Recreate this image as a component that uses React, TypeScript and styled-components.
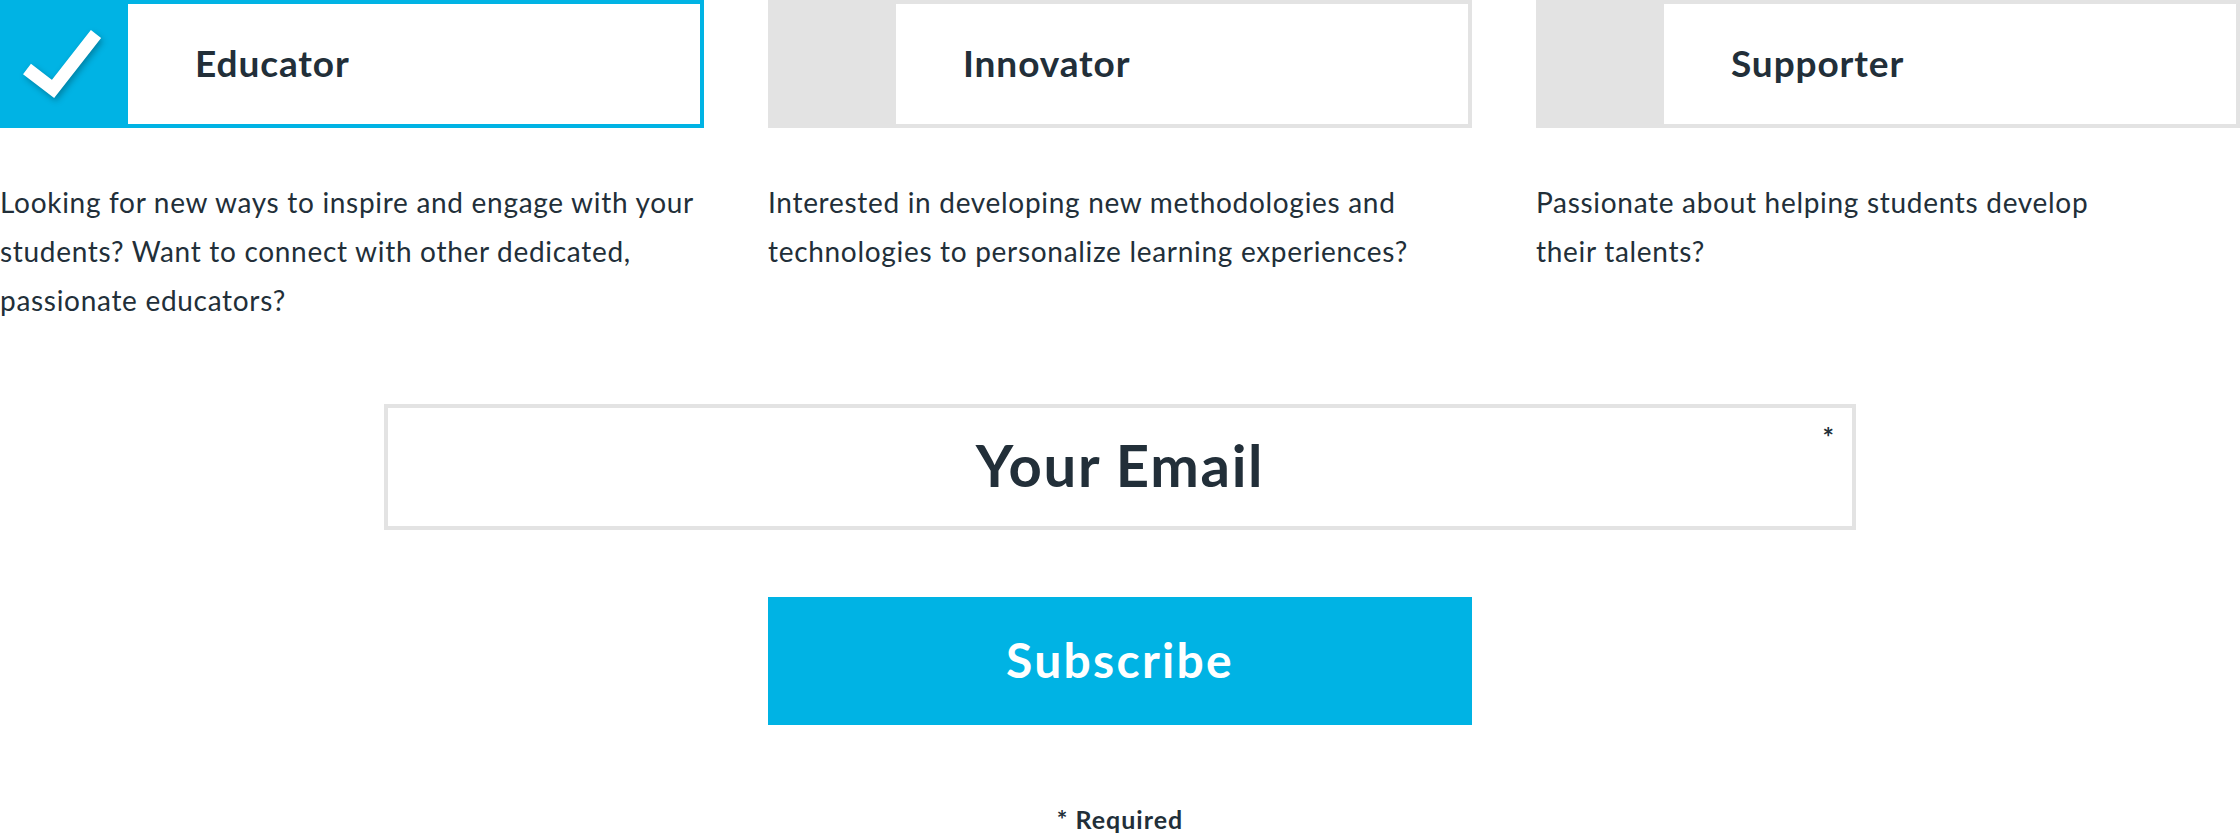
import * as React from 'react'
import styled, { createGlobalStyle, css } from 'styled-components'

const GlobalStyle = createGlobalStyle`
  html, body {
    margin: 0;
    padding: 0;
    background: #ffffff;
  }
  body {
    font-family: 'Lato', 'Noto Sans', sans-serif;
    color: #222f39;
  }
`

const blue = '#00b3e4'
const gray = '#e3e3e3'
const ink = '#222f39'

const Page = styled.div`
  width: 2240px;
  display: flex;
  flex-direction: column;
  align-items: center;
`

const Roles = styled.div`
  width: 100%;
  display: grid;
  grid-template-columns: repeat(3, 1fr);
  column-gap: 64px;
`

const Role = styled.div`
  display: flex;
  flex-direction: column;
`

const Card = styled.button<{ $active?: boolean }>`
  display: flex;
  align-items: stretch;
  height: 128px;
  box-sizing: border-box;
  padding: 0;
  margin: 0;
  background: #ffffff;
  border: 4px solid ${p => (p.$active ? blue : gray)};
  border-left: 0;
  cursor: pointer;
  text-align: left;
`

const Tick = styled.span<{ $active?: boolean }>`
  width: 128px;
  flex: none;
  margin: -4px 0;
  display: flex;
  align-items: center;
  justify-content: center;
  background: ${p => (p.$active ? blue : gray)};

  svg {
    filter: drop-shadow(2px 3px 3px rgba(0, 0, 0, 0.28));
  }
`

const Label = styled.span`
  display: flex;
  align-items: center;
  padding: 0 0 4px 67px;
  font-family: 'Lato', sans-serif;
  font-weight: 700;
  font-size: 37px;
  letter-spacing: 0.9px;
  color: ${ink};
`

const Blurb = styled.p`
  margin: 50px 0 0;
  font-size: 28px;
  letter-spacing: 0.7px;
  line-height: 49px;
  color: ${ink};
`

const EmailField = styled.label`
  position: relative;
  margin-top: 79px;
  width: 1472px;
  height: 126px;
  box-sizing: border-box;
  border: 4px solid ${gray};
  display: flex;
`

const EmailInput = styled.input`
  flex: 1;
  border: 0;
  outline: none;
  background: transparent;
  text-align: center;
  font-family: 'Lato', sans-serif;
  font-weight: 700;
  font-size: 58px;
  letter-spacing: 1.7px;
  color: ${ink};
  padding: 0 0 6px;

  &::placeholder {
    color: ${ink};
    opacity: 1;
  }
`

const Star = styled.span`
  position: absolute;
  top: 12px;
  right: 18px;
  font-weight: 700;
  font-size: 27px;
  color: ${ink};
`

const buttonText = css`
  font-family: 'Lato', sans-serif;
  font-weight: 700;
  color: #ffffff;
`

const Subscribe = styled.button`
  ${buttonText};
  margin-top: 67px;
  width: 704px;
  height: 128px;
  border: 0;
  background: ${blue};
  font-size: 48px;
  letter-spacing: 2.3px;
  padding: 0 0 4px;
  cursor: pointer;
`

const Required = styled.p`
  margin: 79px 0 0;
  font-weight: 700;
  font-size: 25px;
  letter-spacing: 1px;
  line-height: 30px;
  color: ${ink};
`

const Check = () => (
  <svg width="124" height="120" viewBox="0 0 124 120">
    <polyline
      points="25,65 51,85 94,30"
      fill="none"
      stroke="#ffffff"
      strokeWidth="13"
      strokeLinejoin="miter"
      strokeLinecap="butt"
    />
  </svg>
)

const roles = [
  {
    name: 'Educator',
    text: 'Looking for new ways to inspire and engage with your students? Want to connect with other dedicated, passionate educators?',
  },
  {
    name: 'Innovator',
    text: 'Interested in developing new methodologies and technologies to personalize learning experiences?',
  },
  {
    name: 'Supporter',
    text: (
      <>
        Passionate about helping students develop
        <br />
        their talents?
      </>
    ),
  },
]

export default function App() {
  const [picked, setPicked] = React.useState('Educator')

  return (
    <Page>
      <GlobalStyle />
      <Roles>
        {roles.map(r => (
          <Role key={r.name}>
            <Card $active={picked === r.name} onClick={() => setPicked(r.name)}>
              <Tick $active={picked === r.name}>{picked === r.name && <Check />}</Tick>
              <Label>{r.name}</Label>
            </Card>
            <Blurb>{r.text}</Blurb>
          </Role>
        ))}
      </Roles>

      <EmailField>
        <EmailInput type="email" placeholder="Your Email" />
        <Star>*</Star>
      </EmailField>

      <Subscribe>Subscribe</Subscribe>

      <Required>* Required</Required>
    </Page>
  )
}
